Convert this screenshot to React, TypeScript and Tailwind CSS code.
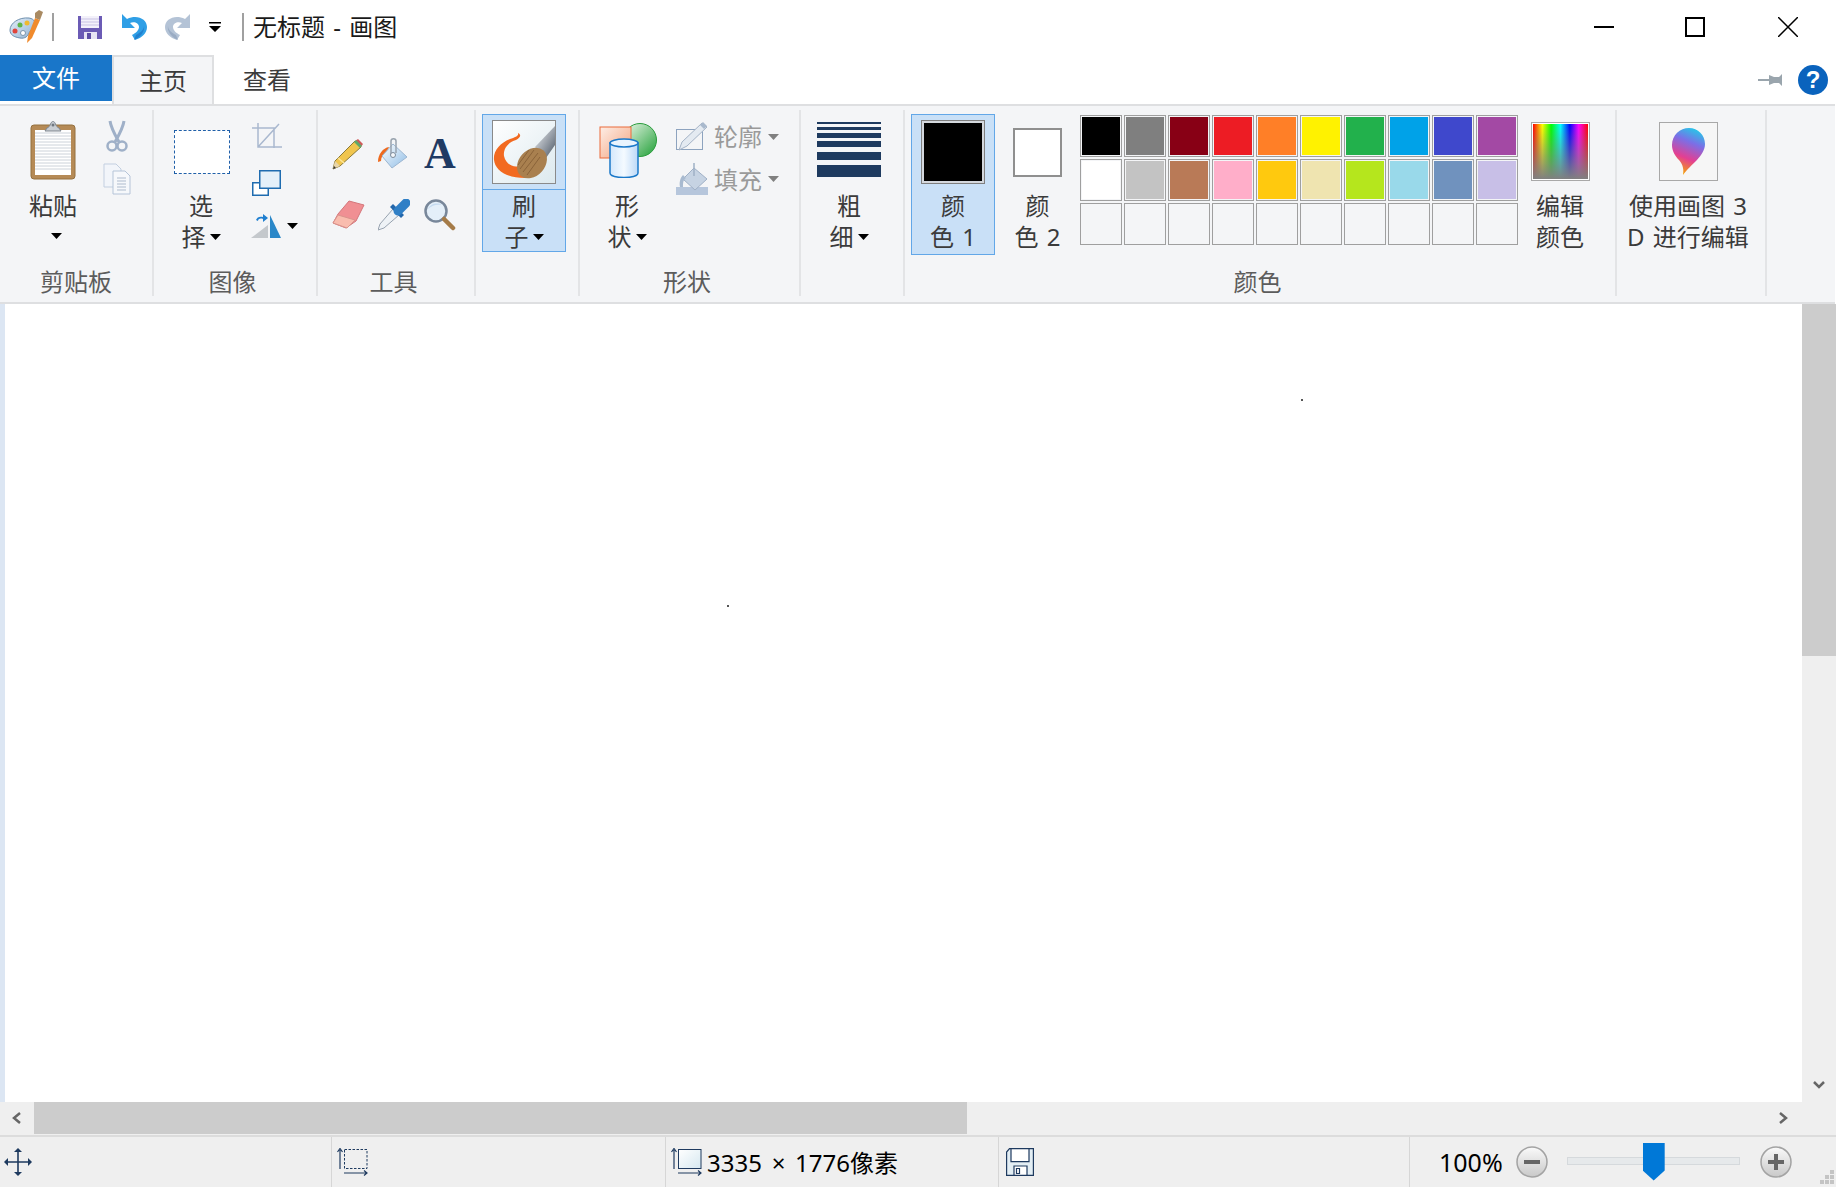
import React from "react";

const swatches = [
  "bg-[#000000]", "bg-[#7f7f7f]", "bg-[#880015]", "bg-[#ed1c24]", "bg-[#ff7f27]",
  "bg-[#fff200]", "bg-[#22b14c]", "bg-[#00a2e8]", "bg-[#3f48cc]", "bg-[#a349a4]",
  "bg-[#ffffff]", "bg-[#c3c3c3]", "bg-[#b97a57]", "bg-[#ffaec9]", "bg-[#ffc90e]",
  "bg-[#efe4b0]", "bg-[#b5e61d]", "bg-[#99d9ea]", "bg-[#7092be]", "bg-[#c8bfe7]",
  "", "", "", "", "", "", "", "", "", "",
];

function Caret({ color = "#000" }: { color?: string }) {
  return (
    <svg width="11" height="6" viewBox="0 0 11 6" className="shrink-0">
      <path d="M0 0h11L5.500 6z" fill={color} />
    </svg>
  );
}

// two-line caption under a big ribbon button, the caret sits after the last line
function Caption({ lines, caret }: { lines: string[]; caret?: boolean }) {
  return (
    <div className="-mt-px flex flex-col items-center text-[24px] leading-[31px] text-[#3b3b3b] whitespace-nowrap [word-spacing:2px]">
      {lines.map((line, i) => (
        <div key={line} className="flex items-center gap-[4px]">
          {line}
          {caret && i === lines.length - 1 && <Caret />}
        </div>
      ))}
    </div>
  );
}

function Group({ label, className, labelClass = "pr-[5px]", children }: { label?: string; className: string; labelClass?: string; children: React.ReactNode }) {
  return (
    <div className={`flex flex-col shrink-0 border-r-2 border-[#e3e4e6] ${className}`}>
      <div className="flex flex-1 min-h-0">{children}</div>
      <div className={`h-[30px] pt-px text-center text-[24px] leading-[30px] text-[#5c5c5c] ${labelClass}`}>{label}</div>
    </div>
  );
}

function AppIcon() {
  return (
    <svg width="34" height="34" viewBox="0 0 34 34">
      <defs>
        <linearGradient id="pal" x1="0" y1="0" x2="1" y2="1">
          <stop offset="0" stopColor="#e6eff8" />
          <stop offset="1" stopColor="#8fb2d3" />
        </linearGradient>
      </defs>
      <path d="M1 20C1 13 10 7 20 8c6 1 7 5 5 9-2 3-4 3-5 6-1 3-4 6-9 5C5 27 1 25 1 20z" fill="url(#pal)" stroke="#6d8fae" />
      <circle cx="6" cy="21" r="2.500" fill="#e0453c" />
      <circle cx="11" cy="15" r="2.500" fill="#5fb548" />
      <circle cx="18" cy="13" r="2.500" fill="#efb92f" />
      <circle cx="14" cy="23" r="2.500" fill="#fff" stroke="#7a95ad" />
      <path d="M26 8 19 26l-1 7 5-5 8-18z" fill="#f08a2c" />
      <path d="M26 8l5 2 3-8-4-2-4 3z" fill="#a98a62" />
    </svg>
  );
}

function SaveIcon() {
  return (
    <svg width="24" height="24" viewBox="0 0 24 24">
      <path d="M0 1h24v23H0z" fill="#6b5bb5" />
      <path d="M3 1h18v12H3z" fill="#f3f1fa" />
      <path d="M3 4h18M3 7h18M3 10h18" stroke="#c9c3e4" />
      <path d="M6 17h13v7H6z" fill="#e7e4f4" />
      <path d="M9 18h4v6H9z" fill="#5d4ea5" />
    </svg>
  );
}

function Undo({ color, dark }: { color: string; dark: string }) {
  return (
    <svg width="26" height="28" viewBox="0 0 26 28">
      <path d="M1 1v14h13l-5-5c4-2 9 0 9 4 0 3-3 6-7 8l3 5c7-2 12-7 12-13C26 6 16 1 6 6z" fill={color} />
      <path d="M15 22c4-2 8-5 8-9 1 5-3 11-10 14z" fill={dark} opacity="0.7" />
    </svg>
  );
}

function PasteIcon() {
  return (
    <svg width="46" height="60" viewBox="0 0 46 60">
      <rect x="1" y="5" width="44" height="54" rx="3" fill="#b58a56" stroke="#94703f" />
      <rect x="5" y="10" width="36" height="45" fill="#fff" />
      <path d="M5 13h36M5 16h36M5 19h36M5 22h36M5 25h36M5 28h36M5 31h36M5 34h36M5 37h36M5 40h36M5 43h36M5 46h36M5 49h36" stroke="#ccd2d9" />
      <path d="M17 8c2-1 3-2 4-5 1-2 3-2 4 0 1 3 2 4 4 5l2 3H15z" fill="#c9ced4" stroke="#7e868f" />
      <circle cx="23" cy="5" r="1.500" fill="#6f7780" />
    </svg>
  );
}

function ScissorsIcon() {
  return (
    <svg width="22" height="32" viewBox="0 0 22 32" fill="none" stroke="#9fb0c8">
      <path d="M4 1c1 7 4 12 9 21M18 1c-1 7-4 12-9 21" strokeWidth="3" />
      <circle cx="6" cy="26" r="4.500" strokeWidth="2.500" />
      <circle cx="16" cy="26" r="4.500" strokeWidth="2.500" />
    </svg>
  );
}

function CopyIcon() {
  return (
    <svg width="28" height="32" viewBox="0 0 28 32">
      <path d="M1 1h12l5 5v18H1z" fill="#f2f5fa" stroke="#c3cfe0" />
      <path d="M10 8h12l5 5v18H10z" fill="#f6f8fb" stroke="#b5c4d8" />
      <path d="M14 15h9M14 18h9M14 21h9M14 24h9M14 27h9" stroke="#aebbcd" />
    </svg>
  );
}

function CropIcon() {
  return (
    <svg width="30" height="30" viewBox="0 0 30 30" fill="none" stroke="#a9b8cf" strokeWidth="1.500">
      <path d="M0 5h22v20M6 0v24h24M6 24 27 1" />
    </svg>
  );
}

function ResizeIcon() {
  return (
    <svg width="29" height="26" viewBox="0 0 29 26">
      <rect x="0.750" y="12.750" width="15.500" height="12.500" fill="#fff" stroke="#1f6cb0" strokeWidth="1.500" />
      <rect x="7.750" y="0.750" width="20.500" height="17.500" fill="#e4f0f9" stroke="#1f6cb0" strokeWidth="1.500" />
    </svg>
  );
}

function RotateIcon() {
  return (
    <svg width="32" height="26" viewBox="0 0 32 26">
      <path d="M18 12v13H1z" fill="#c4c8cc" />
      <path d="M20 2l11 23H20z" fill="#2a87c8" />
      <path d="M6 7c1-3 4-4 7-3V1l5 4-5 4V6C10 5 8 6 8 8z" fill="#1f7fd0" />
    </svg>
  );
}

function PencilIcon() {
  return (
    <svg width="32" height="32" viewBox="0 0 32 32">
      <path d="M23 3l6 6L8 28l-7 3 2-8z" fill="#f0c54e" stroke="#8a7a3a" />
      <path d="M6 20l6 5" stroke="#fbe59a" strokeWidth="1.500" />
      <path d="M1 31l2-8 5 5z" fill="#e8d5a8" />
      <path d="M1 31l1-3 2 2z" fill="#333" />
      <path d="M23 3l3-2 5 5-2 3z" fill="#cf5a5a" />
      <path d="M22 4l6 6 2-2-6-6z" fill="#5ea86a" />
    </svg>
  );
}

function BucketIcon() {
  return (
    <svg width="32" height="32" viewBox="0 0 32 32">
      <defs>
        <linearGradient id="bucket" x1="0" y1="0" x2="1" y2="1">
          <stop offset="0" stopColor="#fdfeff" />
          <stop offset="1" stopColor="#8fbde6" />
        </linearGradient>
      </defs>
      <path d="M11 9C5 10 0 16 0 24c1 0 2-1 3-1 0-4 2-7 6-9z" fill="#ee6a1f" />
      <path d="M15 6 29 19 14 30 4 18z" fill="url(#bucket)" stroke="#9db7d2" />
      <path d="M13 17V3c0-3 5-3 5 0v12" fill="none" stroke="#98a3ae" strokeWidth="1.500" />
      <circle cx="15" cy="17" r="2.500" fill="#f4f7fa" stroke="#7c8b9b" />
    </svg>
  );
}

function LetterIcon() {
  return (
    <div className="flex h-[32px] w-[34px] items-center justify-center font-['Liberation_Serif',serif] text-[44px] leading-[32px] font-bold text-[#1f3a63]">
      A
    </div>
  );
}

function EraserIcon() {
  return (
    <svg width="33" height="29" viewBox="0 0 33 29">
      <path d="M17 1 32 5 24 21 14 28 1 23 6 14z" fill="#f08f93" stroke="#d4767b" />
      <path d="M1 23l5-8 17 5-8 8z" fill="#f9bcae" stroke="#d9938c" />
    </svg>
  );
}

function DropperIcon() {
  return (
    <svg width="32" height="32" viewBox="0 0 32 32">
      <defs>
        <linearGradient id="bulb" x1="0" y1="1" x2="1" y2="0">
          <stop offset="0" stopColor="#1c62a8" />
          <stop offset="1" stopColor="#4a9ade" />
        </linearGradient>
      </defs>
      <path d="M0 31l2-6 13-15 6 6L6 29z" fill="#eef2f6" stroke="#98a3b0" />
      <path d="M12 8l11 11 3-3L15 5z" fill="#2367ab" />
      <path d="M20 12l8-8" stroke="#2f7fc6" strokeWidth="9" strokeLinecap="round" />
    </svg>
  );
}

function MagnifierIcon() {
  return (
    <svg width="32" height="32" viewBox="0 0 32 32">
      <circle cx="12" cy="12" r="10.500" fill="#e4eff9" stroke="#78879a" strokeWidth="2.500" />
      <path d="M4 10c2-5 9-7 14-4-5-1-10 0-14 4z" fill="#c5dbf0" />
      <path d="M20 20l9 9" stroke="#a57b48" strokeWidth="4.500" strokeLinecap="round" />
    </svg>
  );
}

function BrushIcon() {
  return (
    <svg width="64" height="64" viewBox="0 0 64 64">
      <defs>
        <linearGradient id="brushBg" x1="0" y1="0" x2="1" y2="1">
          <stop offset="0" stopColor="#fff" />
          <stop offset="1" stopColor="#dce9ee" />
        </linearGradient>
        <linearGradient id="brushMetal" x1="0" y1="0" x2="1" y2="1">
          <stop offset="0" stopColor="#f4f6f8" />
          <stop offset="1" stopColor="#4d5866" />
        </linearGradient>
      </defs>
      <rect x="0.500" y="0.500" width="63" height="63" fill="url(#brushBg)" stroke="#8a8a8a" />
      <path d="M26 13c1 3-3 4-8 6C8 23 1 31 2 40c1 10 12 18 31 18 1-4 0-9-5-12-8 2-14-2-16-10-1-8 5-14 12-16 4-2 6-5 2-7z" fill="#f26a21" />
      <path d="M43 27 63 6v19l-9 13z" fill="url(#brushMetal)" />
      <ellipse cx="40" cy="43" rx="13" ry="17" transform="rotate(42 40 43)" fill="#a9804f" />
      <path d="M28 49l14-19M31 52l15-19M35 55l13-18M26 45l11-15" stroke="#8a6339" />
    </svg>
  );
}

function ShapesIcon() {
  return (
    <svg width="58" height="56" viewBox="0 0 58 56">
      <defs>
        <linearGradient id="ball" x1="0" y1="0" x2="1" y2="1">
          <stop offset="0" stopColor="#eef8ec" />
          <stop offset="1" stopColor="#1f9f36" />
        </linearGradient>
        <linearGradient id="rect" x1="0" y1="0" x2="1" y2="1">
          <stop offset="0" stopColor="#fdeee6" />
          <stop offset="1" stopColor="#f4a27d" />
        </linearGradient>
        <linearGradient id="cyl" x1="0" y1="0" x2="1" y2="0">
          <stop offset="0" stopColor="#d3e7fb" />
          <stop offset="0.5" stopColor="#f4faff" />
          <stop offset="1" stopColor="#bcd8f7" />
        </linearGradient>
      </defs>
      <circle cx="41" cy="18" r="16.500" fill="url(#ball)" stroke="#2a9c3d" />
      <rect x="1" y="5" width="31" height="31" fill="url(#rect)" stroke="#ea6a3a" />
      <path d="M11 21v30c0 6 28 6 28 0V21z" fill="url(#cyl)" stroke="#1a78c9" strokeWidth="1.500" />
      <ellipse cx="25" cy="21" rx="14" ry="4" fill="#e9f4fe" stroke="#1a78c9" strokeWidth="1.500" />
    </svg>
  );
}

function OutlineIcon() {
  return (
    <svg width="32" height="29" viewBox="0 0 32 29">
      <rect x="0.500" y="7.500" width="26" height="20" fill="none" stroke="#8da3bf" />
      <path d="M26 1l5 4L11 24l-8 4 3-8z" fill="#e4eaf1" stroke="#a4b3c6" />
      <path d="M27 0l4 4-3 3-4-4z" fill="#a9b9cd" />
    </svg>
  );
}

function FillIcon() {
  return (
    <svg width="32" height="32" viewBox="0 0 32 32">
      <rect x="0" y="24" width="32" height="8" fill="#b6c6dc" />
      <path d="M18 5 31 16 19 27 7 16z" fill="#c6d3e3" stroke="#9fb0c6" />
      <path d="M7 12c-3 3-4 8-3 12h3c0-4 0-7 3-9z" fill="#a8bad0" />
      <path d="M18 0v13" stroke="#9fb0c6" strokeWidth="1.500" />
    </svg>
  );
}

function RainbowIcon() {
  return (
    <svg width="59" height="59" viewBox="0 0 59 59">
      <defs>
        <linearGradient id="hue" x1="0" y1="0" x2="1" y2="0">
          <stop offset="0" stopColor="#ff0000" />
          <stop offset="0.17" stopColor="#ffff00" />
          <stop offset="0.33" stopColor="#00ff00" />
          <stop offset="0.5" stopColor="#00ffff" />
          <stop offset="0.67" stopColor="#0000ff" />
          <stop offset="0.83" stopColor="#ff00ff" />
          <stop offset="1" stopColor="#ff0000" />
        </linearGradient>
        <linearGradient id="sat" x1="0" y1="0" x2="0" y2="1">
          <stop offset="0" stopColor="#808080" stopOpacity="0" />
          <stop offset="1" stopColor="#808080" />
        </linearGradient>
      </defs>
      <rect x="0.500" y="0.500" width="58" height="58" fill="#fff" stroke="#a8a8a8" />
      <rect x="2" y="2" width="55" height="55" fill="url(#hue)" />
      <rect x="2" y="2" width="55" height="55" fill="url(#sat)" />
    </svg>
  );
}

function Paint3dIcon() {
  return (
    <svg width="59" height="59" viewBox="0 0 59 59">
      <defs>
        <linearGradient id="drop" x1="0.650" y1="0" x2="0.350" y2="1">
          <stop offset="0" stopColor="#27c6e8" />
          <stop offset="0.3" stopColor="#7b6fe6" />
          <stop offset="0.65" stopColor="#e33f92" />
          <stop offset="1" stopColor="#f5a800" />
        </linearGradient>
      </defs>
      <rect x="0.500" y="0.500" width="58" height="58" fill="#f6f6f6" stroke="#a8a8a8" />
      <path d="M30 6c9 0 16 7 16 16 0 12-14 20-22 31 1-6 0-10-4-15-4-4-7-9-7-15C13 13 21 6 30 6z" fill="url(#drop)" />
    </svg>
  );
}

function ColorSwatch({ className, size }: { className: string; size: "lg" | "sm" }) {
  if (size === "lg") {
    return (
      <div className="h-[64px] w-[64px] border border-[#7f7f7f] bg-[#d4d8de] p-[2px]">
        <div className={`h-full w-full ${className}`} />
      </div>
    );
  }
  return (
    <div className="h-[49px] w-[49px] border-2 border-[#8f8f8f] bg-white">
      <div className={`h-full w-full ${className}`} />
    </div>
  );
}

function Chevron({ points }: { points: string }) {
  return (
    <svg width="12" height="12" viewBox="0 0 12 12" fill="none" stroke="#666" strokeWidth="2.500">
      <polyline points={points} />
    </svg>
  );
}

function Ribbon() {
  return (
    <div className="mr-px flex h-[200px] shrink-0 border-y-2 border-[#dedfe1] bg-[#f4f5f7] pt-[4px] pb-[6px]">
      {/* clipboard */}
      <Group label="剪贴板" className="w-[154px]" labelClass="pr-0">
        <div className="ml-[14px] flex w-[78px] flex-col items-center">
          <div className="flex h-[81px] items-start pt-[10px]"><PasteIcon /></div>
          <Caption lines={["粘贴"]} />
          <div className="mt-[12px] ml-[6px]"><Caret /></div>
        </div>
        <div className="ml-[11px] flex flex-col items-center gap-[11px] pt-[10px]">
          <ScissorsIcon />
          <CopyIcon />
        </div>
      </Group>

      {/* image */}
      <Group label="图像" className="w-[164px]">
        <div className="ml-[8px] flex w-[78px] flex-col items-center">
          <div className="ml-px flex h-[81px] items-start pt-[20px]">
            <div className="h-[44px] w-[56px] border border-dashed border-[#1f5fa8] bg-white" />
          </div>
          <Caption lines={["选", "择"]} caret />
        </div>
        <div className="ml-[12px] flex flex-col items-start pt-[13px]">
          <CropIcon />
          <div className="mt-[17px]"><ResizeIcon /></div>
          <div className="mt-[17px] -ml-[2px] flex items-center gap-[5px]">
            <RotateIcon />
            <Caret />
          </div>
        </div>
      </Group>

      {/* tools */}
      <Group label="工具" className="w-[158px]">
        <div className="ml-[7px] grid grid-cols-[46px_46px_46px] auto-rows-[61px] place-items-center pt-[13px] h-fit">
          <PencilIcon />
          <BucketIcon />
          <LetterIcon />
          <EraserIcon />
          <DropperIcon />
          <MagnifierIcon />
        </div>
      </Group>

      {/* brushes */}
      <Group className="w-[104px]">
        <div className="mt-[4px] ml-[6px] h-[138px] w-[84px] border border-[#62a7e8] bg-[#c9e0f7]">
          <div className="flex h-[75px] justify-center border-b border-[#62a7e8] pt-[5px]"><BrushIcon /></div>
          <div className="pt-[1px]"><Caption lines={["刷", "子"]} caret /></div>
        </div>
      </Group>

      {/* shapes */}
      <Group label="形状" className="w-[221px]">
        <div className="ml-[8px] flex w-[78px] flex-col items-center">
          <div className="ml-[2px] flex h-[81px] items-start pt-[12px]"><ShapesIcon /></div>
          <Caption lines={["形", "状"]} caret />
        </div>
        <div className="ml-[10px] flex flex-col gap-[12px] pt-[12px] text-[24px] leading-[29px] text-[#9a9a9a]">
          <div className="flex items-center gap-[6px]">
            <OutlineIcon />
            轮廓
            <Caret color="#808080" />
          </div>
          <div className="flex items-center gap-[6px]">
            <FillIcon />
            填充
            <Caret color="#808080" />
          </div>
        </div>
      </Group>

      {/* line size */}
      <Group className="w-[104px]">
        <div className="flex w-full flex-col items-center pr-[6px]">
          <div className="h-[81px] w-[64px] pt-[12px]">
            <div className="h-[2px] bg-[#1e3a5f]" />
            <div className="mt-[3px] h-[3px] bg-[#1e3a5f]" />
            <div className="mt-[3px] h-[5px] bg-[#1e3a5f]" />
            <div className="mt-[3px] h-[6px] bg-[#1e3a5f]" />
            <div className="mt-[5px] h-[8px] bg-[#1e3a5f]" />
            <div className="mt-[5px] h-[12px] bg-[#1e3a5f]" />
          </div>
          <Caption lines={["粗", "细"]} caret />
        </div>
      </Group>

      {/* colours */}
      <Group label="颜色" className="w-[712px]">
        <div className="mt-[4px] ml-[6px] h-[141px] w-[84px] border border-[#62a7e8] bg-[#c9e0f7]">
          <div className="flex h-[76px] justify-center pt-[5px]">
            <ColorSwatch className="bg-black" size="lg" />
          </div>
          <Caption lines={["颜", "色 1"]} />
        </div>
        <div className="flex w-[85px] flex-col items-center">
          <div className="flex h-[81px] items-start pt-[18px]">
            <ColorSwatch className="bg-white" size="sm" />
          </div>
          <Caption lines={["颜", "色 2"]} />
        </div>
        <div className="mt-[5px] grid h-fit grid-cols-[repeat(10,42px)] gap-[2px]">
          {swatches.map((color, i) => (
            <div key={i} className="h-[42px] w-[42px] border border-[#9f9f9f] p-px">
              <div className={`h-full w-full ${color}`} />
            </div>
          ))}
        </div>
        <div className="ml-[3px] flex w-[78px] flex-col items-center">
          <div className="flex h-[81px] items-start pt-[12px]"><RainbowIcon /></div>
          <Caption lines={["编辑", "颜色"]} />
        </div>
      </Group>

      {/* paint 3d */}
      <Group className="w-[150px]">
        <div className="flex w-full flex-col items-center pr-[6px]">
          <div className="flex h-[81px] items-start pt-[12px]"><Paint3dIcon /></div>
          <Caption lines={["使用画图 3", "D 进行编辑"]} />
        </div>
      </Group>
    </div>
  );
}

function StatusBar() {
  return (
    <div className="flex h-[52px] shrink-0 border-t-2 border-[#dcdcdc] bg-[#efefef] text-[24px] text-black">
      <div className="flex w-[332px] shrink-0 items-center border-r border-[#d6d6d6] pl-[4px]">
        <svg width="28" height="28" viewBox="0 0 28 28" fill="#1e3a5f">
          <path d="M13.200 3h1.600v22h-1.600zM3 13.200h22v1.600H3z" />
          <path d="M14 0l4 4h-8zM14 28l-4-4h8zM0 14l4-4v8zM28 14l-4 4v-8z" />
        </svg>
      </div>
      <div className="flex w-[334px] shrink-0 items-center border-r border-[#d6d6d6] pl-[5px]">
        <svg width="31" height="28" viewBox="0 0 31 28" fill="none" stroke="#1e3a5f">
          <path d="M3 21V2M0.500 4 3 0.500 5.500 4" strokeWidth="1.200" />
          <rect x="7.500" y="1.500" width="22.500" height="19" strokeDasharray="2.500 1.500" />
          <path d="M7 25h23M27 22.500l3 2.500-3 2.500" strokeWidth="1.200" />
        </svg>
      </div>
      <div className="flex w-[333px] shrink-0 items-center border-r border-[#d6d6d6] pl-[5px]">
        <svg width="31" height="28" viewBox="0 0 31 28" fill="none" stroke="#1e3a5f">
          <defs>
            <linearGradient id="canvasSize" x1="0" y1="0" x2="1" y2="1">
              <stop offset="0" stopColor="#fff" />
              <stop offset="1" stopColor="#d6e8f0" />
            </linearGradient>
          </defs>
          <path d="M3 21V2M0.500 4 3 0.500 5.500 4" strokeWidth="1.200" />
          <rect x="7.500" y="1.500" width="22.500" height="19" fill="url(#canvasSize)" />
          <path d="M7 25h23M27 22.500l3 2.500-3 2.500" strokeWidth="1.200" />
        </svg>
        <span className="ml-[5px] pt-[2px] whitespace-nowrap [word-spacing:3.500px]">3335 × 1776像素</span>
      </div>
      <div className="flex w-[411px] shrink-0 items-center border-r border-[#d6d6d6] pl-[7px]">
        <svg width="28" height="28" viewBox="0 0 28 28" fill="none" stroke="#1e3a5f" strokeWidth="1.200">
          <path d="M3.500 0.600h23.900v26.800H0.600V4z" fill="#e3eef4" />
          <path d="M5 0.600h18v13H5z" fill="#fff" />
          <path d="M8 18h13v9.400H8z" fill="#fff" />
          <path d="M10.500 20.500h3v5h-3z" />
        </svg>
      </div>
      <div className="flex flex-1 items-center pl-[29px]">
        <span className="pt-[2px] text-[25px]">100%</span>
        <svg width="32" height="32" viewBox="0 0 32 32" className="ml-[13px]">
          <defs>
            <linearGradient id="zoomBtn" x1="0" y1="0" x2="0" y2="1">
              <stop offset="0" stopColor="#fafafa" />
              <stop offset="1" stopColor="#c8c8c8" />
            </linearGradient>
          </defs>
          <circle cx="16" cy="16" r="15" fill="url(#zoomBtn)" stroke="#a3a3a3" strokeWidth="1.500" />
          <path d="M8 14h16v4H8z" fill="#666" />
        </svg>
        <div className="relative mb-[3px] ml-[19px] h-[8px] w-[173px] border border-[#d5d9dc] bg-[#e6e9eb]">
          {/* zoom slider thumb */}
          <div className="absolute top-[-15px] left-[75px] h-[38px] w-[22px] bg-[#0078d7] [clip-path:polygon(0_0,100%_0,100%_74%,50%_100%,0_74%)]" />
        </div>
        <svg width="32" height="32" viewBox="0 0 32 32" className="ml-[20px]">
          <circle cx="16" cy="16" r="15" fill="url(#zoomBtn)" stroke="#a3a3a3" strokeWidth="1.500" />
          <path d="M8 14h16v4H8z" fill="#666" />
          <path d="M14 8h4v16h-4z" fill="#666" />
        </svg>
      </div>
    </div>
  );
}

export default function App() {
  return (
    <div className="relative flex h-screen w-full flex-col overflow-hidden bg-white font-['Noto_Sans','Noto_Sans_CJK_SC',sans-serif]">
      {/* title bar */}
      <div className="flex h-[55px] shrink-0 items-center pb-[2px] text-[24px] text-[#1a1a1a]">
        <div className="ml-[9px]"><AppIcon /></div>
        <div className="ml-[9px] h-[28px] w-[2px] bg-[#a0a0a0]" />
        <div className="ml-[24px]"><SaveIcon /></div>
        <div className="ml-[19px]"><Undo color="#2f9fe6" dark="#1b73c4" /></div>
        <div className="ml-[18px] -scale-x-100"><Undo color="#b4c3d6" dark="#8fa3bc" /></div>
        <svg width="12" height="10" viewBox="0 0 12 10" className="ml-[18px]">
          <path d="M0 0h12v1.500H0zM0 4h12L6 10z" fill="#000" />
        </svg>
        <div className="ml-[21px] h-[28px] w-[2px] bg-[#a0a0a0]" />
        <span className="ml-[9px] whitespace-nowrap [word-spacing:2px]">无标题 - 画图</span>
        <div className="ml-auto flex items-center">
          <div className="h-[2px] w-[20px] bg-black" />
          <div className="ml-[71px] h-[20px] w-[20px] border-2 border-black" />
          <svg width="20" height="20" viewBox="0 0 20 20" className="ml-[73px] mr-[38px]" stroke="#000" strokeWidth="1.500">
            <path d="M0 0l20 20M20 0 0 20" />
          </svg>
        </div>
      </div>

      {/* tabs */}
      <div className="flex h-[49px] shrink-0 items-start text-[24px] text-[#3b3b3b]">
        <div className="flex h-[46px] w-[112px] items-center justify-center bg-[#1976c9] text-white">文件</div>
        <div className="flex h-[49px] w-[102px] items-center justify-center border-x-2 border-t-2 border-[#dedfe1] bg-[#f4f5f7] pt-px">主页</div>
        <div className="flex h-[49px] w-[106px] items-center justify-center pt-px">查看</div>
        <div className="ml-auto flex h-[49px] items-center pr-[8px]">
          <svg width="24" height="14" viewBox="0 0 24 14" fill="#9aa5ad">
            <path d="M0 6h11v2H0zM11 2l5 2h5l3-3v12l-3-3h-5l-5 2z" />
          </svg>
          <div className="ml-[16px] flex h-[30px] w-[30px] items-center justify-center rounded-full bg-[#0a63bd] font-['Liberation_Sans',sans-serif] text-[24px] font-bold text-white">?</div>
        </div>
      </div>

      <Ribbon />

      {/* canvas */}
      <div className="flex min-h-0 flex-1">
        <div className="w-[5px] shrink-0 bg-[#dce6f3]" />
        <div className="relative flex-1 bg-white">
          {/* stray pixels on the canvas */}
          <div className="absolute top-[95px] left-[1296px] h-[2px] w-[2px] bg-[#555]" />
          <div className="absolute top-[301px] left-[722px] h-[2px] w-[2px] bg-[#555]" />
        </div>
        <div className="flex w-[34px] shrink-0 flex-col bg-[#efefef]">
          <div className="h-[352px] bg-[#cccccc]" />
          <div className="mt-auto flex justify-center pb-[11px]">
            <Chevron points="1,3 6,8 11,3" />
          </div>
        </div>
      </div>

      {/* horizontal scrollbar */}
      <div className="flex h-[33px] shrink-0 items-start bg-[#efefef]">
        <div className="flex h-[32px] w-[34px] items-center justify-center"><Chevron points="9,1 3,6 9,11" /></div>
        <div className="h-[32px] w-[933px] bg-[#cccccc]" />
        <div className="ml-auto flex h-[32px] w-[59px] items-center justify-start"><Chevron points="3,1 9,6 3,11" /></div>
      </div>

      <StatusBar />

      {/* resize grip */}
      <svg width="16" height="16" viewBox="0 0 16 16" fill="#c4c4c4" className="absolute right-[1px] bottom-[2px]">
        <path d="M11 1h4v4h-4zM6 6h4v4H6zM11 6h4v4h-4zM1 11h4v4H1zM6 11h4v4H6zM11 11h4v4h-4z" />
      </svg>
    </div>
  );
}
